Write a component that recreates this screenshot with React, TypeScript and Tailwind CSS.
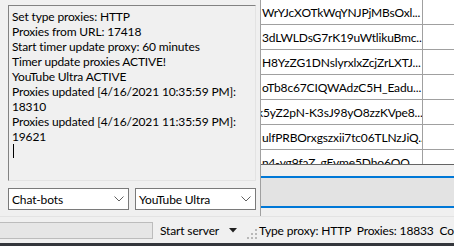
const logLines = [
  "Set type proxies: HTTP",
  "Proxies from URL: 17418",
  "Start timer update proxy: 60 minutes",
  "Timer update proxies ACTIVE!",
  "YouTube Ultra ACTIVE",
  "Proxies updated [4/16/2021 10:35:59 PM]:",
  "18310",
  "Proxies updated [4/16/2021 11:35:59 PM]:",
  "19621",
];

const rows = [
  "WrYJcXOTkWqYNJPjMBsOxl...",
  "3dLWLDsG7rK19uWtlikuBmc...",
  "H8YzZG1DNslyrxlxZcjZrLXTJ...",
  "oTb8c67CIQWAdzC5H_Eadu...",
  "k5yZ2pN-K3sJ98yO8zzKVpe8...",
  "ulfPRBOrxgszxii7tc06TLNzJiQ...",
  "n4-vg9faZ_gEvme5Dho6QO...",
];

const Chevron = () => (
  <svg width="10" height="6" viewBox="0 0 10 6" className="text-[#606060]">
    <path d="M0.5 0.5 L5 5 L9.5 0.5" fill="none" stroke="currentColor" strokeWidth="1" />
  </svg>
);

const Combo = ({ label }: { label: string }) => (
  <div className="w-[121px] h-[22px] bg-white border border-[#7a7a7a] flex items-center justify-between pl-[3px] pr-[4px]">
    <span className="whitespace-nowrap">{label}</span>
    <Chevron />
  </div>
);

export default function App() {
  return (
    <div
      className="w-[454px] h-[246px] overflow-hidden bg-[#f0f0f0] flex flex-col text-[12px] tracking-[-0.15px] text-black leading-[15px]"
      style={{ fontFamily: 'Lato, "Liberation Sans", sans-serif' }}
    >
      <div className="flex h-[216px] shrink-0">
        {/* left panel */}
        <div className="w-[260px] shrink-0 pl-[8px] pt-[5px] flex flex-col gap-[7px]">
          <div className="w-[248px] h-[176px] border-t border-l border-[#828282] border-r border-b border-r-[#e3e3e3] border-b-[#e3e3e3] pl-[3px] pt-[3px]">
            {logLines.map((l, i) => (
              <div key={i} className="whitespace-nowrap">{l}</div>
            ))}
            <div className="w-px h-[14px] bg-black ml-[1px]" />
          </div>
          <div className="flex gap-[6px]">
            <Combo label="Chat-bots" />
            <Combo label="YouTube Ultra" />
          </div>
        </div>
        <div className="w-px bg-[#a0a0a0]" />
        {/* grid */}
        <div className="flex-1 flex flex-col overflow-hidden">
          <div className="h-[164px] bg-white overflow-hidden">
            {rows.map((r, i) => (
              <div key={i} className="flex h-[25px] border-b border-[#a0a0a0]">
                <div className="w-[162px] border-r border-[#a0a0a0] overflow-hidden whitespace-nowrap flex items-center">
                  <span className={i === 4 ? "ml-[-4px]" : "ml-[1px]"}>{r}</span>
                </div>
                <div className="flex-1" />
              </div>
            ))}
          </div>
          <div className="h-px bg-[#646464]" />
          <div className="h-[11px]" />
          <div className="h-[32px] border-y-2 border-[#0078d7] bg-[#e3e3e3]" />
        </div>
      </div>
      {/* status strip */}
      <div className="flex items-center h-[27px] shrink-0 border-t border-[#e3e3e3] whitespace-nowrap">
        <div className="w-[153px] shrink-0 h-[17px] border border-l-0 border-[#bcbcbc] bg-[#e6e6e6]" />
        <div className="ml-[7px] shrink-0 flex items-center gap-[10px]">
          <span>Start server</span>
          <svg width="8" height="5" viewBox="0 0 8 5">
            <path d="M0 0 H8 L4 4.5 Z" fill="#202020" />
          </svg>
        </div>
        <svg width="12" height="12" viewBox="0 0 12 12" className="shrink-0 ml-[9px] mt-[8px]">
          {[[9, 1], [9, 5], [5, 5], [9, 9], [5, 9], [1, 9]].map(([x, y], i) => (
            <rect key={i} x={x} y={y} width="2" height="2" fill="#b8b8b8" />
          ))}
        </svg>
        <span className="ml-[1px]">Type proxy: HTTP&nbsp;&nbsp;Proxies: 18833&nbsp;&nbsp;Connected</span>
      </div>
      <div className="h-[3px] shrink-0 bg-[#34373c]" />
    </div>
  );
}
